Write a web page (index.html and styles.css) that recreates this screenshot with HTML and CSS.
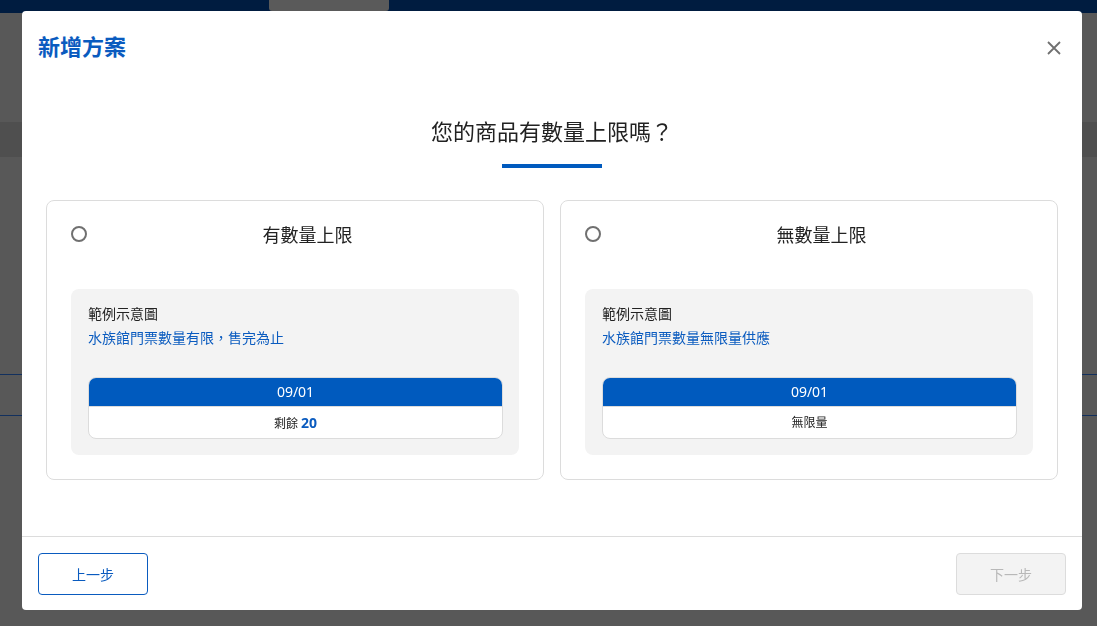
FILE: index.html
```html
<!DOCTYPE html>
<html lang="zh-Hant">

<head>
	<meta charset="UTF-8">
	<meta name="viewport" content="width=device-width, initial-scale=1.0">
	<title>新增方案</title>
	<link rel="stylesheet" href="styles.css">
</head>

<body>
	<!-- 背景頁面 -->
	<div class="page">
		<div class="topbar">
			<div class="topbar-tab"></div>
		</div>
		<div class="page-band"></div>
		<div class="page-line line-a"></div>
		<div class="page-line line-b"></div>
	</div>

	<!-- 彈窗 -->
	<div class="modal">
		<div class="modal-header">
			<h2 class="modal-title">新增方案</h2>
			<button class="modal-close" aria-label="close">
				<svg width="16" height="16" viewBox="0 0 16 16">
					<path d="M2 2 L14 14 M14 2 L2 14" stroke="#707070" stroke-width="1.8" fill="none" />
				</svg>
			</button>
		</div>

		<div class="modal-body">
			<div class="question">您的商品有數量上限嗎？</div>
			<div class="question-bar"></div>

			<div class="options">
				<div class="option">
					<div class="option-head">
						<span class="radio"></span>
						<span class="option-title">有數量上限</span>
					</div>
					<div class="example">
						<div class="example-label">範例示意圖</div>
						<div class="example-desc">水族館門票數量有限，售完為止</div>
						<div class="date-card">
							<div class="date-head">09/01</div>
							<div class="date-body">剩餘 <b class="num">20</b></div>
						</div>
					</div>
				</div>

				<div class="option">
					<div class="option-head">
						<span class="radio"></span>
						<span class="option-title">無數量上限</span>
					</div>
					<div class="example">
						<div class="example-label">範例示意圖</div>
						<div class="example-desc">水族館門票數量無限量供應</div>
						<div class="date-card">
							<div class="date-head">09/01</div>
							<div class="date-body">無限量</div>
						</div>
					</div>
				</div>
			</div>
		</div>

		<div class="modal-footer">
			<button class="btn btn-prev">上一步</button>
			<button class="btn btn-next" disabled>下一步</button>
		</div>
	</div>
</body>

</html>
```

FILE: styles.css
```css
body {
	margin: 0;
	padding: 0;
	background: #585858;
	font-family: "Noto Sans", "Noto Sans CJK TC", sans-serif;
	color: #222;
	overflow: hidden;
}

/* 背景頁面 */
.page {
	height: 626px;
}

.topbar {
	height: 13px;
	background: #001c40;
	position: relative;
}

.topbar-tab {
	position: absolute;
	left: 269px;
	top: 0;
	width: 120px;
	height: 11px;
	background: #5a5a5a;
	border-radius: 0 0 3px 3px;
}

.page-band {
	margin-top: 109px;
	height: 35px;
	background: #4f4f4f;
}

.page-line {
	height: 1px;
	background: #12305e;
}

.line-a {
	margin-top: 217px;
}

.line-b {
	margin-top: 40px;
}

/* 彈窗 */
.modal {
	position: fixed;
	left: 22px;
	top: 11px;
	width: 1060px;
	height: 599px;
	background: #fff;
	border-radius: 4px;
	display: flex;
	flex-direction: column;
}

.modal-header {
	display: flex;
	justify-content: space-between;
	align-items: center;
	padding: 23px 15px 0 16px;
	height: 24px;
}

.modal-title {
	margin: 0;
	font-size: 22px;
	line-height: 24px;
	font-weight: 700;
	color: #0a5bbf;
}

.modal-close {
	border: none;
	background: none;
	padding: 0;
	margin-top: 4px;
	width: 26px;
	height: 26px;
	display: flex;
	align-items: center;
	justify-content: center;
	cursor: pointer;
}

.modal-body {
	flex: 1;
	padding: 0 24px;
	display: flex;
	flex-direction: column;
	align-items: center;
}

.question {
	margin-top: 58px;
	font-size: 22px;
	line-height: 30px;
	color: #222;
}

.question-bar {
	margin-top: 18px;
	width: 100px;
	height: 4px;
	background: #005abe;
}

.options {
	margin-top: 32px;
	width: 100%;
	display: grid;
	grid-template-columns: 1fr 1fr;
	gap: 16px;
}

.option {
	border: 1px solid #dcdcdc;
	border-radius: 8px;
	height: 278px;
	padding: 0 24px;
}

.option-head {
	position: relative;
	height: 88px;
}

.radio {
	position: absolute;
	left: 0;
	top: 25px;
	width: 12px;
	height: 12px;
	border: 2px solid #707070;
	border-radius: 50%;
}

.option-title {
	display: block;
	padding-left: 25px;
	padding-top: 21px;
	text-align: center;
	font-size: 18px;
	line-height: 26px;
	color: #222;
}

.example {
	background: #f3f3f3;
	border-radius: 8px;
	padding: 15px 16px 16px 17px;
}

.example-label {
	font-size: 14px;
	line-height: 20px;
	color: #222;
}

.example-desc {
	margin-top: 4px;
	font-size: 14px;
	line-height: 20px;
	color: #0a5bbf;
}

.date-card {
	margin-top: 29px;
	border: 1px solid #dcdcdc;
	border-radius: 8px;
	overflow: hidden;
	background: #fff;
}

.date-head {
	background: #005abe;
	color: #fff;
	text-align: center;
	font-size: 14px;
	line-height: 28px;
}

.date-body {
	text-align: center;
	font-size: 12px;
	line-height: 30px;
	height: 30px;
	padding-top: 1px;
	color: #222;
	border-top: 1px solid #dcdcdc;
}

.date-body .num {
	font-size: 14px;
	color: #0a5bbf;
}

.modal-footer {
	border-top: 1px solid #dcdcdc;
	height: 74px;
	flex-shrink: 0;
	padding: 16px 16px 0 16px;
	box-sizing: border-box;
	display: flex;
	justify-content: space-between;
	align-items: flex-start;
}

.btn {
	width: 110px;
	height: 42px;
	border-radius: 4px;
	font-family: inherit;
	font-size: 14px;
	background: #fff;
	cursor: pointer;
}

.btn-prev {
	border: 1px solid #0a5bbf;
	color: #0a5bbf;
}

.btn-next {
	border: 1px solid #dcdcdc;
	background: #f3f3f3;
	color: #b8b8b8;
	cursor: default;
}
```
